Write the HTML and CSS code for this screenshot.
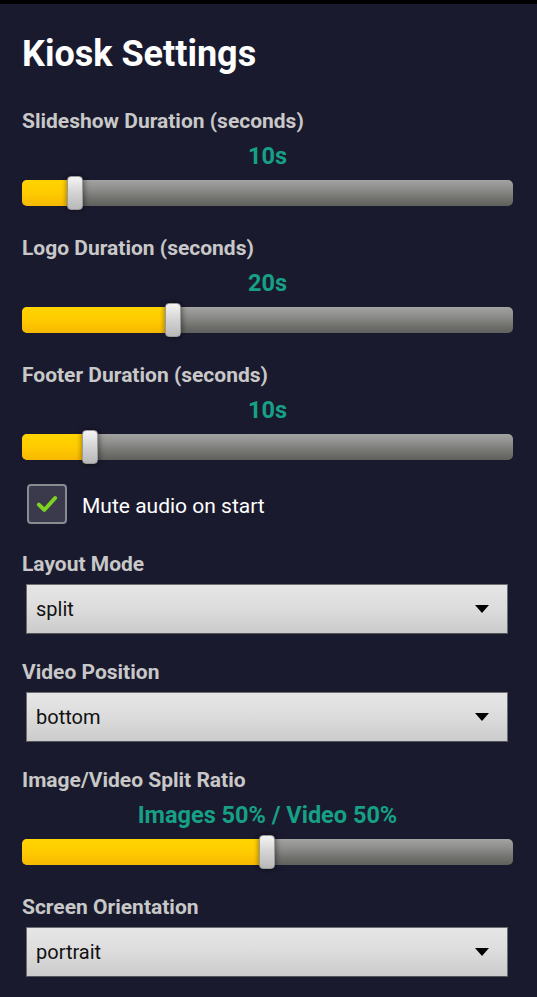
FILE: index.html
```html
<!DOCTYPE html>
<html lang="en">
<head>
<meta charset="utf-8">
<title>Kiosk Settings</title>
<link rel="stylesheet" href="styles.css">
</head>
<body>
<div class="topbar"></div>
<main class="page">
  <h1 class="title">Kiosk Settings</h1>

  <section class="field">
    <div class="label">Slideshow Duration (seconds)</div>
    <div class="value">10s</div>
    <div class="slider">
      <div class="track"><div class="fill" style="width:53px"></div></div>
      <div class="thumb" style="left:45px"></div>
    </div>
  </section>

  <section class="field">
    <div class="label">Logo Duration (seconds)</div>
    <div class="value">20s</div>
    <div class="slider">
      <div class="track"><div class="fill" style="width:151px"></div></div>
      <div class="thumb" style="left:143px"></div>
    </div>
  </section>

  <section class="field">
    <div class="label">Footer Duration (seconds)</div>
    <div class="value">10s</div>
    <div class="slider">
      <div class="track"><div class="fill" style="width:68px"></div></div>
      <div class="thumb" style="left:60px"></div>
    </div>
  </section>

  <label class="check-row">
    <span class="checkbox">
      <svg viewBox="0 0 24 24" width="26" height="26"><path d="M4.5 12.5 L9.5 17.5 L19.5 6.5" fill="none" stroke="#7ed321" stroke-width="3.6" stroke-linecap="round" stroke-linejoin="round"/></svg>
    </span>
    <span class="check-text">Mute audio on start</span>
  </label>

  <section class="field">
    <div class="label">Layout Mode</div>
    <div class="select"><span>split</span><span class="arrow"></span></div>
  </section>

  <section class="field">
    <div class="label">Video Position</div>
    <div class="select"><span>bottom</span><span class="arrow"></span></div>
  </section>

  <section class="field">
    <div class="label">Image/Video Split Ratio</div>
    <div class="value">Images 50% / Video 50%</div>
    <div class="slider">
      <div class="track"><div class="fill" style="width:245px"></div></div>
      <div class="thumb" style="left:237px"></div>
    </div>
  </section>

  <section class="field">
    <div class="label">Screen Orientation</div>
    <div class="select"><span>portrait</span><span class="arrow"></span></div>
  </section>
</main>
</body>
</html>
```

FILE: styles.css
```css
html, body {
  margin: 0;
  padding: 0;
  background: #1a1a2e;
  font-family: Roboto, "Noto Sans", "Liberation Sans", sans-serif;
  color: #ffffff;
  height: 997px;
  overflow: hidden;
}

.topbar {
  height: 4px;
  background: #000000;
}

.page {
  padding: 0 24px 0 22px;
  display: flex;
  flex-direction: column;
}

.title {
  margin: 29px 0 34px 0;
  font-size: 36px;
  line-height: 42px;
  font-weight: 700;
  color: #ffffff;
}

.field {
  display: flex;
  flex-direction: column;
  margin-bottom: 26px;
}

.label {
  font-size: 21px;
  line-height: 24px;
  font-weight: 700;
  color: #c8c8c8;
}

.value {
  margin-top: 10px;
  text-align: center;
  font-size: 23.5px;
  line-height: 26px;
  font-weight: 700;
  color: #16a085;
}

.slider {
  position: relative;
  margin-top: 7px;
  height: 34px;
  display: flex;
  align-items: center;
}

.track {
  width: 100%;
  height: 26px;
  border-radius: 5px;
  overflow: hidden;
  background: linear-gradient(to bottom, #a3a3a1 0%, #8d8e8b 35%, #72736f 70%, #5e605b 100%);
}

.fill {
  height: 100%;
  background: linear-gradient(to bottom, #ffd400 0%, #ffcb00 50%, #f6b800 100%);
}

.thumb {
  position: absolute;
  top: 0;
  width: 16px;
  height: 34px;
  box-sizing: border-box;
  border-radius: 4px;
  border: 1px solid #9a9a9a;
  background: linear-gradient(to bottom, #f4f4f4 0%, #d6d6d6 45%, #b8b8b8 100%);
  box-shadow: 2px 0 5px rgba(0, 0, 0, 0.35), -2px 0 4px rgba(0, 0, 0, 0.2);
}

.check-row {
  display: flex;
  align-items: center;
  margin: -6px 0 28px 5px;
  height: 40px;
}

.checkbox {
  width: 40px;
  height: 40px;
  box-sizing: border-box;
  border: 2px solid #8a8a92;
  border-radius: 4px;
  background: #3a3a4c;
  display: flex;
  align-items: center;
  justify-content: center;
}

.check-text {
  margin-left: 15px;
  font-size: 21px;
  line-height: 24px;
  color: #ffffff;
  padding-top: 3px;
}

.select {
  margin: 8px 0 0 4px;
  width: 482px;
  height: 50px;
  box-sizing: border-box;
  border: 1px solid #6e6e72;
  border-bottom-color: #555559;
  background: linear-gradient(to bottom, #e6e6e6 0%, #dcdcdc 50%, #cbcbcb 100%);
  display: flex;
  align-items: center;
  justify-content: space-between;
  padding: 0 18px 0 9px;
  font-size: 20px;
  color: #111111;
}

.arrow {
  width: 0;
  height: 0;
  border-left: 7px solid transparent;
  border-right: 7px solid transparent;
  border-top: 8px solid #000000;
}
```
